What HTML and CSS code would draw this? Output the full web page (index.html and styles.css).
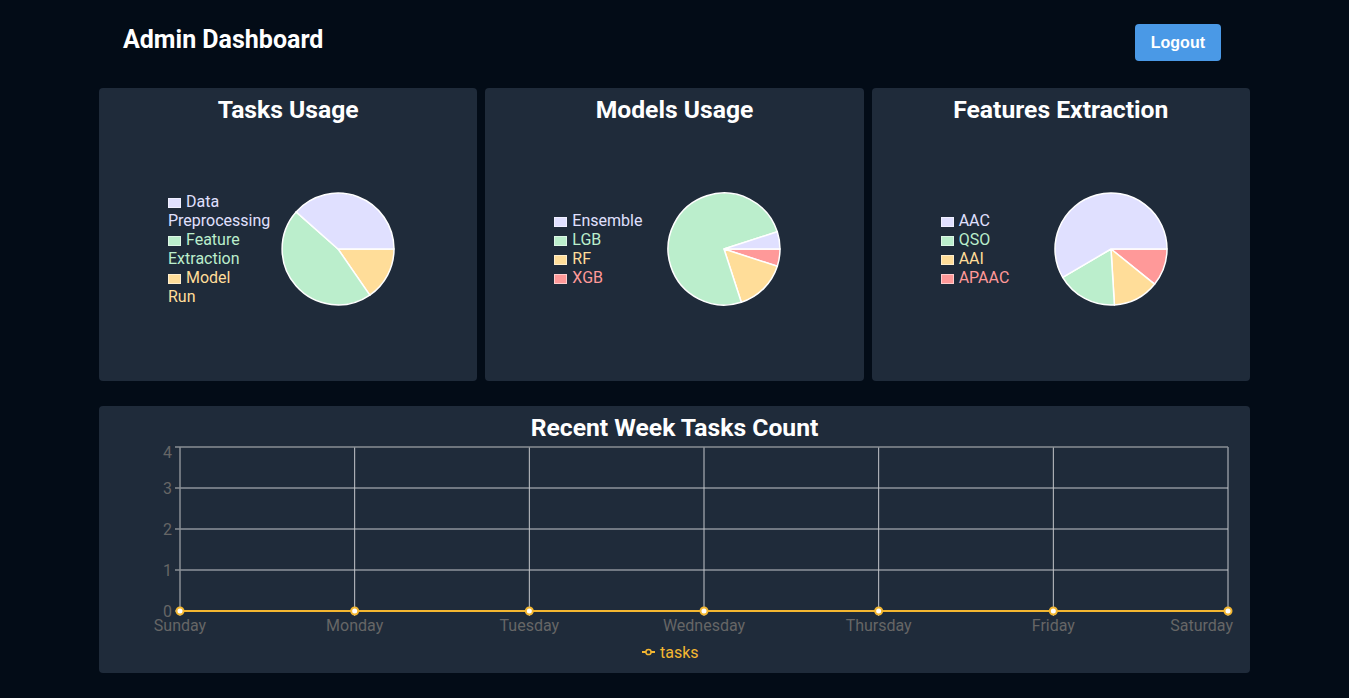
FILE: index.html
```html
<!DOCTYPE html>
<html lang="en">
<head>
<meta charset="utf-8">
<title>Admin Dashboard</title>
<link rel="stylesheet" href="styles.css">
</head>
<body>
<div class="container">
  <header class="header">
    <h1 class="brand">Admin Dashboard</h1>
    <button class="logout">Logout</button>
  </header>

  <section class="cards">
    <div class="card">
      <h2 class="card-title">Tasks Usage</h2>
      <div class="pie-body">
        <ul class="legend">
          <li class="c-lav"><span class="box"></span>Data<br>Preprocessing</li>
          <li class="c-grn"><span class="box"></span>Feature<br>Extraction</li>
          <li class="c-yel"><span class="box"></span>Model<br>Run</li>
        </ul>
        <svg class="pie" width="114" height="114" viewBox="0 0 114 114">
          <path class="s-yel" d="M57 57 L113 57 A56 56 0 0 1 88.8 103.1 Z"/>
          <path class="s-grn" d="M57 57 L88.8 103.1 A56 56 0 0 1 15.1 19.9 Z"/>
          <path class="s-lav" d="M57 57 L15.1 19.9 A56 56 0 0 1 113 57 Z"/>
        </svg>
      </div>
    </div>

    <div class="card">
      <h2 class="card-title">Models Usage</h2>
      <div class="pie-body">
        <ul class="legend">
          <li class="c-lav"><span class="box"></span>Ensemble</li>
          <li class="c-grn"><span class="box"></span>LGB</li>
          <li class="c-yel"><span class="box"></span>RF</li>
          <li class="c-red"><span class="box"></span>XGB</li>
        </ul>
        <svg class="pie" width="114" height="114" viewBox="0 0 114 114">
          <path class="s-red" d="M57 57 L113 57 A56 56 0 0 1 110.3 74.3 Z"/>
          <path class="s-yel" d="M57 57 L110.3 74.3 A56 56 0 0 1 74.3 110.3 Z"/>
          <path class="s-grn" d="M57 57 L74.3 110.3 A56 56 0 1 1 110.3 39.7 Z"/>
          <path class="s-lav" d="M57 57 L110.3 39.7 A56 56 0 0 1 113 57 Z"/>
        </svg>
      </div>
    </div>

    <div class="card">
      <h2 class="card-title">Features Extraction</h2>
      <div class="pie-body">
        <ul class="legend">
          <li class="c-lav"><span class="box"></span>AAC</li>
          <li class="c-grn"><span class="box"></span>QSO</li>
          <li class="c-yel"><span class="box"></span>AAI</li>
          <li class="c-red"><span class="box"></span>APAAC</li>
        </ul>
        <svg class="pie" width="114" height="114" viewBox="0 0 114 114">
          <path class="s-red" d="M57 57 L113 57 A56 56 0 0 1 100.5 92.2 Z"/>
          <path class="s-yel" d="M57 57 L100.5 92.2 A56 56 0 0 1 60.4 112.9 Z"/>
          <path class="s-grn" d="M57 57 L60.4 112.9 A56 56 0 0 1 8.7 85.4 Z"/>
          <path class="s-lav" d="M57 57 L8.7 85.4 A56 56 0 1 1 113 57 Z"/>
        </svg>
      </div>
    </div>
  </section>

  <section class="card wide">
    <h2 class="card-title">Recent Week Tasks Count</h2>
    <svg class="line-chart" width="1151" height="223" viewBox="0 0 1151 223">
      <g class="grid">
        <line x1="81" y1="46" x2="1129" y2="46"/>
        <line x1="81" y1="87" x2="1129" y2="87"/>
        <line x1="81" y1="128" x2="1129" y2="128"/>
        <line x1="255.67" y1="5" x2="255.67" y2="174"/>
        <line x1="430.33" y1="5" x2="430.33" y2="174"/>
        <line x1="605" y1="5" x2="605" y2="174"/>
        <line x1="779.67" y1="5" x2="779.67" y2="174"/>
        <line x1="954.33" y1="5" x2="954.33" y2="174"/>
        <line x1="1129" y1="5" x2="1129" y2="174"/>
        <line x1="81" y1="169" x2="1129" y2="169"/>
      </g>
      <g class="axis">
        <line x1="76" y1="5" x2="1129" y2="5"/>
        <line x1="81" y1="5" x2="81" y2="174"/>
        <line x1="76" y1="46" x2="81" y2="46"/>
        <line x1="76" y1="87" x2="81" y2="87"/>
        <line x1="76" y1="128" x2="81" y2="128"/>
        <line x1="76" y1="169" x2="81" y2="169"/>
      </g>
      <g class="ylabels">
        <text x="73" y="16">4</text>
        <text x="73" y="52">3</text>
        <text x="73" y="93">2</text>
        <text x="73" y="134">1</text>
        <text x="73" y="175">0</text>
      </g>
      <g class="xlabels">
        <text x="81" y="189">Sunday</text>
        <text x="255.67" y="189">Monday</text>
        <text x="430.33" y="189">Tuesday</text>
        <text x="605" y="189">Wednesday</text>
        <text x="779.67" y="189">Thursday</text>
        <text x="954.33" y="189">Friday</text>
        <text x="1134" y="189" class="end">Saturday</text>
      </g>
      <line class="series" x1="81" y1="169" x2="1129" y2="169"/>
      <g class="points">
        <circle cx="81" cy="169" r="3.5"/>
        <circle cx="255.67" cy="169" r="3.5"/>
        <circle cx="430.33" cy="169" r="3.5"/>
        <circle cx="605" cy="169" r="3.5"/>
        <circle cx="779.67" cy="169" r="3.5"/>
        <circle cx="954.33" cy="169" r="3.5"/>
        <circle cx="1129" cy="169" r="3.5"/>
      </g>
      <g class="series-legend">
        <line x1="543" y1="210" x2="556" y2="210"/>
        <circle cx="549.5" cy="210" r="2.6"/>
        <text x="561" y="215.5">tasks</text>
      </g>
    </svg>
  </section>
</div>
</body>
</html>
```

FILE: styles.css
```css
* { box-sizing: border-box; }

body {
  margin: 0;
  background: #030c17;
  font-family: Roboto, "Liberation Sans", Arial, sans-serif;
  color: #fff;
}

.container {
  width: 1151px;
  margin: 0 auto;
}

.header {
  height: 88px;
  display: flex;
  justify-content: space-between;
  align-items: flex-start;
  padding: 24px 29px 0 24px;
}

.brand {
  margin: 0;
  font-size: 25px;
  line-height: 32px;
  font-weight: 700;
  color: #fff;
}

.logout {
  height: 37px;
  padding: 0 16px;
  border: none;
  border-radius: 4px;
  background: #4a99e6;
  color: #fff;
  font-family: "Liberation Sans", Arial, sans-serif;
  font-weight: 700;
  font-size: 16px;
  cursor: pointer;
}

.cards {
  display: grid;
  grid-template-columns: repeat(3, 1fr);
  gap: 8px;
}

.card {
  background: #1f2b3a;
  border-radius: 4px;
  height: 293px;
  padding: 8px 0;
  display: flex;
  flex-direction: column;
}

.card-title {
  margin: 0;
  text-align: center;
  font-size: 24.7px;
  line-height: 28px;
  font-weight: 700;
  color: #fff;
}

.pie-body {
  flex: 1;
  display: flex;
  align-items: center;
  padding-left: 69px;
}

.legend {
  list-style: none;
  margin: 0;
  padding: 0;
  width: 113px;
  font-size: 16px;
  line-height: 19px;
}

.legend .box {
  display: inline-block;
  width: 13px;
  height: 10px;
  margin-right: 5px;
  vertical-align: -1px;
  border: 1px solid rgba(255, 255, 255, 0.5);
}

.c-lav { color: #e0e0ff; }
.c-grn { color: #bbeecc; }
.c-yel { color: #ffdd99; }
.c-red { color: #ff9999; }
.c-lav .box { background: #e0e0ff; }
.c-grn .box { background: #bbeecc; }
.c-yel .box { background: #ffdd99; }
.c-red .box { background: #ff9999; }

.pie { display: block; }
.pie path { stroke: #fff; stroke-width: 1.5; stroke-linejoin: round; }
.s-lav { fill: #e0e0ff; }
.s-grn { fill: #bbeecc; }
.s-yel { fill: #ffdd99; }
.s-red { fill: #ff9999; }

.wide {
  margin-top: 25px;
  height: 267px;
}

.line-chart {
  display: block;
  font-family: Roboto, "Liberation Sans", Arial, sans-serif;
}

.grid line { stroke: #c4c7cb; stroke-width: 1; }
.axis line { stroke: #8a8f95; stroke-width: 1.5; }

.ylabels text {
  fill: #666;
  font-size: 16px;
  text-anchor: end;
}

.xlabels text {
  fill: #666;
  font-size: 16px;
  text-anchor: middle;
}
.xlabels text.end { text-anchor: end; }

.series { stroke: #f4b731; stroke-width: 2; }
.points circle { fill: #fff; stroke: #f4b731; stroke-width: 2; }

.series-legend line { stroke: #f4b731; stroke-width: 2; }
.series-legend circle { fill: #1f2b3a; stroke: #f4b731; stroke-width: 1.5; }
.series-legend text { fill: #f4b731; font-size: 16px; }
```
